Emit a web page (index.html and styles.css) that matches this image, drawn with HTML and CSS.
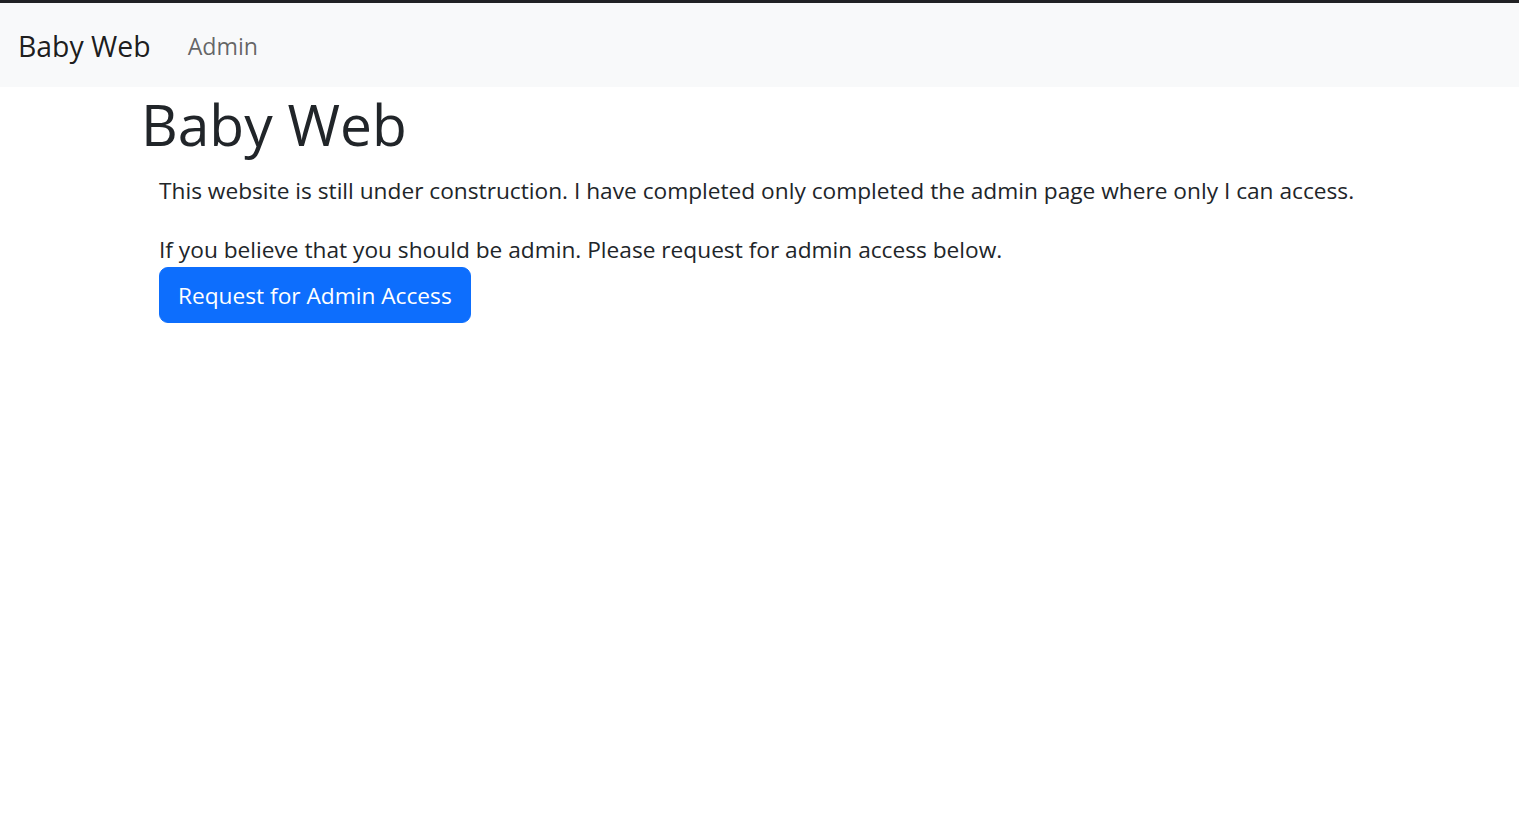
FILE: index.html
```html
<!DOCTYPE html>
<html lang="en">
<head>
<meta charset="utf-8">
<title>Baby Web</title>
<link rel="stylesheet" href="styles.css">
</head>
<body>
<div class="topline"></div>
<nav class="navbar">
  <a class="brand" href="#">Baby Web</a>
  <a class="nav-link" href="#">Admin</a>
</nav>
<main class="container">
  <h1 class="title">Baby Web</h1>
  <div class="content">
    <p class="intro">This website is still under construction. I have completed only completed the admin page where only I can access.</p>
    <p class="note">If you believe that you should be admin. Please request for admin access below.</p>
    <button class="btn-primary" type="button">Request for Admin Access</button>
  </div>
</main>
</body>
</html>
```
FILE: styles.css
```css
* { box-sizing: border-box; }
html, body { margin: 0; padding: 0; }
body {
  font-family: "Open Sans", "Noto Sans", sans-serif;
  font-size: 22.7px;
  color: #212529;
  background: #fff;
}
.topline { height: 3px; background: #202124; }
.navbar {
  height: 84px;
  background: #f8f9fa;
  display: flex;
  align-items: center;
  padding: 0 18px;
}
.brand {
  font-size: 28.4px;
  color: rgba(0,0,0,0.9);
  text-decoration: none;
  margin-right: 37px;
  padding-top: 2px;
}
.nav-link {
  font-size: 23.2px;
  color: rgba(0,0,0,0.6);
  text-decoration: none;
  padding-top: 2px;
}
.container { padding: 0 0 0 141px; }
.title {
  font-size: 56.9px;
  font-weight: 400;
  line-height: 72px;
  margin: 0 0 12px;
  padding-top: 1px;
}
.content { padding-left: 18px; }
.intro, .note { margin: 0; line-height: 36px; }
.intro { padding-top: 1px; margin-bottom: 23px; }
.note { margin-bottom: -1px; }
.btn-primary {
  font-family: inherit;
  font-size: 22.7px;
  line-height: 36px;
  padding: 10px 18px 8px;
  height: 56px;
  color: #fff;
  background: #0d6efd;
  border: 1.5px solid #0d6efd;
  border-radius: 9px;
}
```
